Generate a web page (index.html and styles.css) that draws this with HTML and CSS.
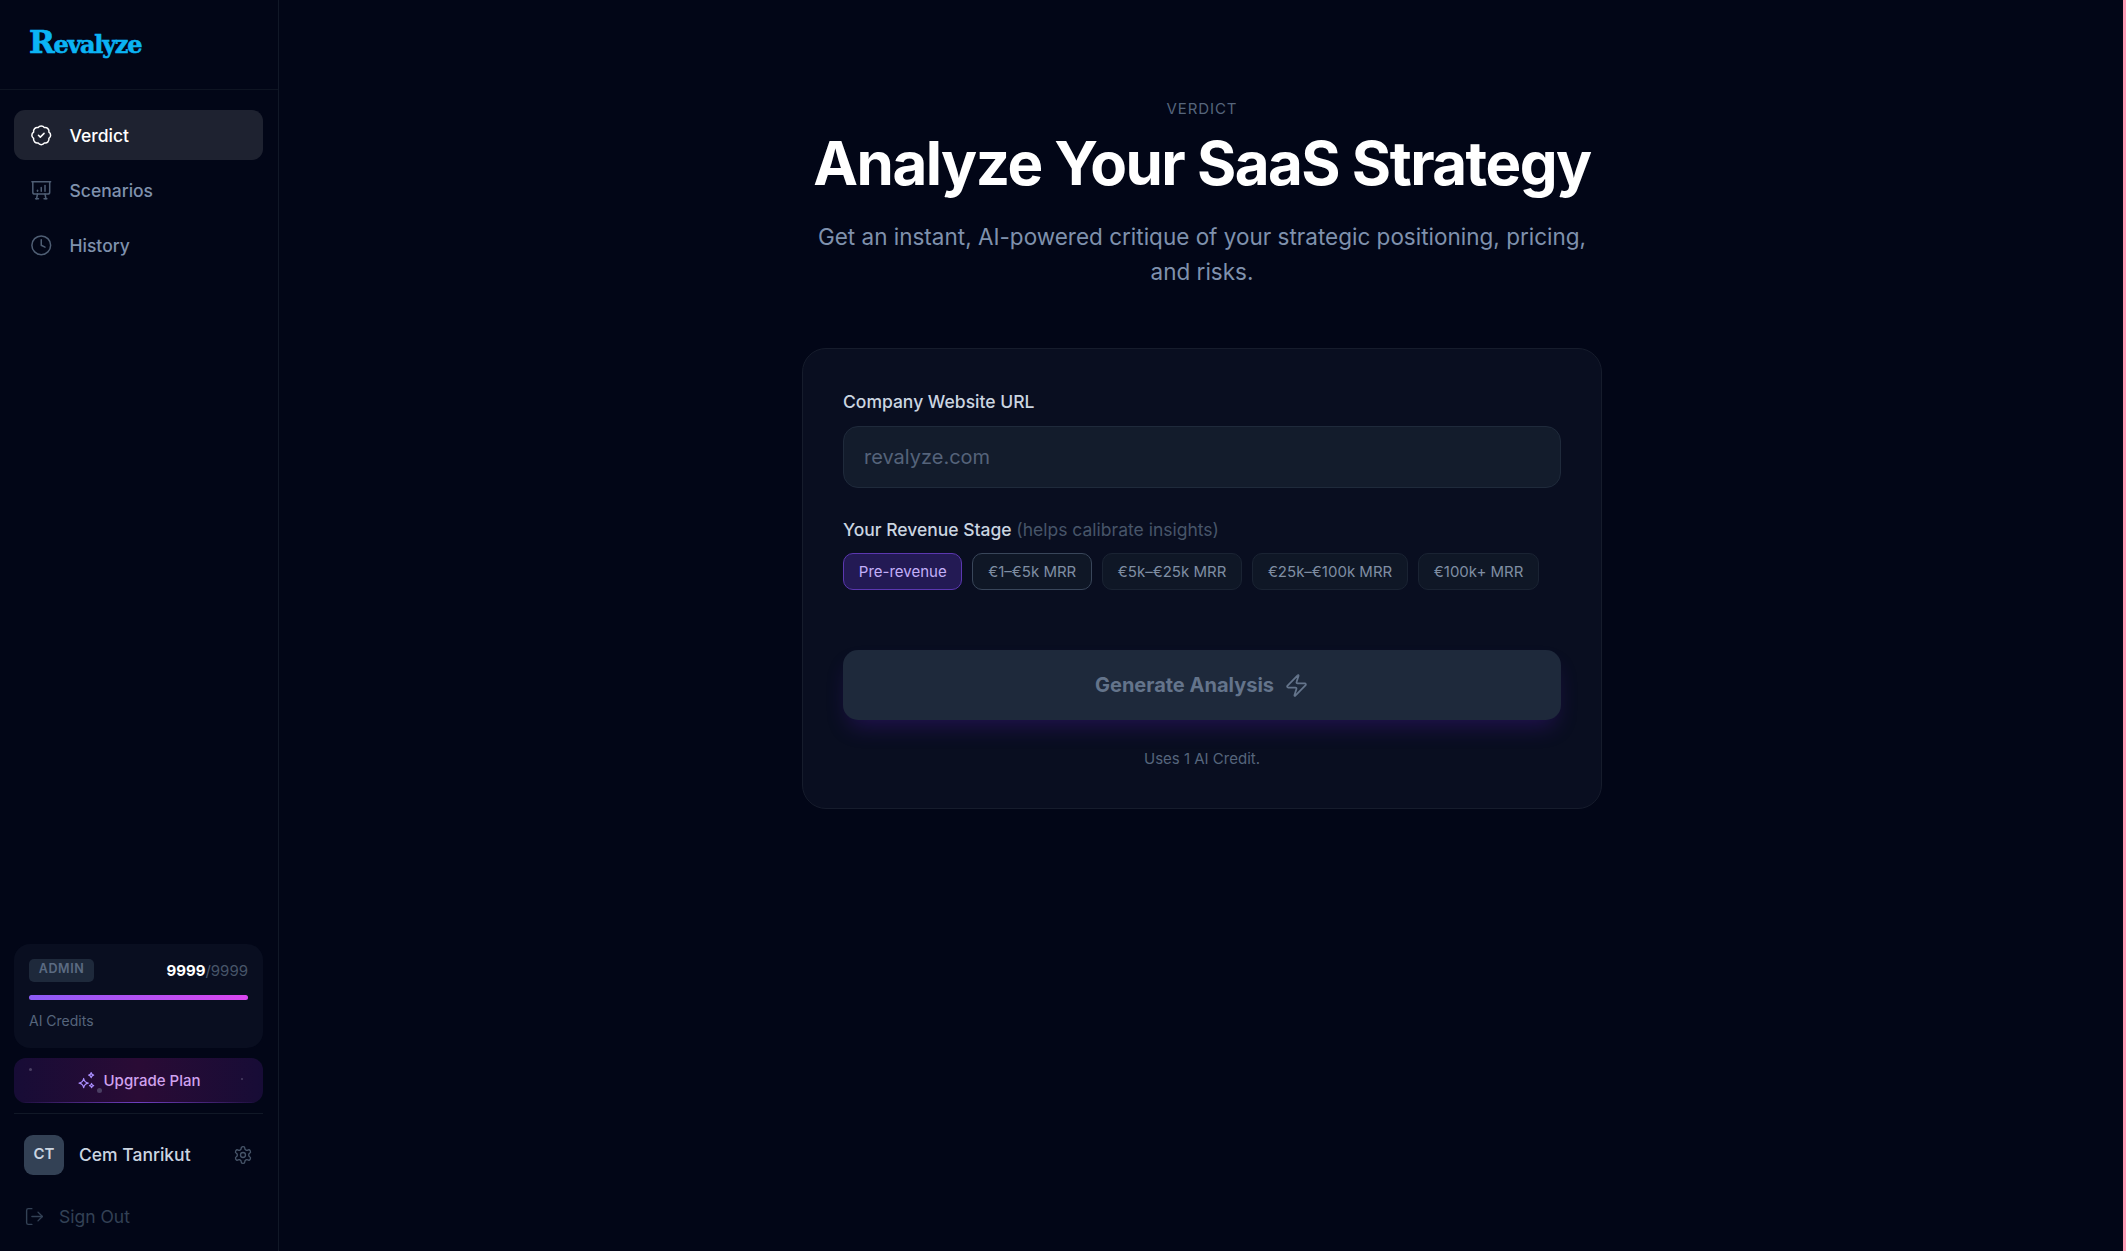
FILE: index.html
```html
<!DOCTYPE html>
<html lang="en">
<head>
    <meta charset="UTF-8">
    <title>Revalyze</title>
    <link rel="stylesheet" href="styles.css">
</head>
<body>
    <aside class="sidebar">
        <div class="logo-row"><span class="logo"><span class="logo-r">R</span>evalyze</span></div>
        <nav class="nav">
            <a class="nav-item active">
                <svg class="nav-icon" viewBox="0 0 24 24"><path d="M3.85 8.62a4 4 0 0 1 4.78-4.77 4 4 0 0 1 6.74 0 4 4 0 0 1 4.78 4.78 4 4 0 0 1 0 6.74 4 4 0 0 1-4.77 4.78 4 4 0 0 1-6.75 0 4 4 0 0 1-4.78-4.77 4 4 0 0 1 0-6.76Z"/><path d="m9 12 2 2 4-4"/></svg>
                Verdict
            </a>
            <a class="nav-item">
                <svg class="nav-icon" viewBox="0 0 24 24"><path d="M2 3h20"/><path d="M21 3v11a2 2 0 0 1-2 2H5a2 2 0 0 1-2-2V3"/><path d="m7 21 1-5"/><path d="m17 21-1-5"/><path d="M6 21h3"/><path d="M15 21h3"/><path d="M8 12v1"/><path d="M12 9v4"/><path d="M16 7v6"/></svg>
                Scenarios
            </a>
            <a class="nav-item">
                <svg class="nav-icon" viewBox="0 0 24 24"><circle cx="12" cy="12" r="10"/><path d="M12 6v6l4 2"/></svg>
                History
            </a>
        </nav>
        <div class="side-bottom">
            <div class="credits">
                <div class="credits-top">
                    <span class="badge">ADMIN</span>
                    <span class="count"><b>9999</b>/9999</span>
                </div>
                <div class="bar"><div class="bar-fill"></div></div>
                <div class="credits-label">AI Credits</div>
            </div>
            <a class="upgrade">
                <i class="dot dot-a"></i><i class="dot dot-b"></i><i class="dot dot-c"></i>
                <svg class="upgrade-icon" viewBox="0 0 24 24"><path d="M8 9c.6 3.400 2.100 4.900 5.500 5.500-3.400.6-4.900 2.100-5.500 5.500-.6-3.400-2.100-4.900-5.500-5.500C5.900 13.900 7.400 12.400 8 9Z"/><path d="M17 2c.3 1.900 1.100 2.700 3 3-1.900.3-2.700 1.100-3 3-.3-1.900-1.100-2.700-3-3 1.900-.3 2.700-1.100 3-3Z"/><path d="M17.500 15c.3 1.600.9 2.200 2.500 2.500-1.600.3-2.200.9-2.500 2.500-.3-1.600-.9-2.200-2.500-2.500 1.600-.3 2.200-.9 2.500-2.500Z"/></svg>
                Upgrade Plan
            </a>
            <div class="user-row">
                <div class="avatar">CT</div>
                <span class="user-name">Cem Tanrikut</span>
                <svg class="gear" viewBox="0 0 24 24"><path d="M12.220 2h-.44a2 2 0 0 0-2 2v.18a2 2 0 0 1-1 1.730l-.43.25a2 2 0 0 1-2 0l-.15-.08a2 2 0 0 0-2.730.73l-.22.380a2 2 0 0 0 .73 2.730l.15.1a2 2 0 0 1 1 1.720v.51a2 2 0 0 1-1 1.740l-.15.09a2 2 0 0 0-.73 2.730l.22.380a2 2 0 0 0 2.730.73l.15-.08a2 2 0 0 1 2 0l.43.25a2 2 0 0 1 1 1.730V20a2 2 0 0 0 2 2h.44a2 2 0 0 0 2-2v-.18a2 2 0 0 1 1-1.730l.43-.25a2 2 0 0 1 2 0l.15.08a2 2 0 0 0 2.730-.73l.22-.390a2 2 0 0 0-.73-2.730l-.15-.08a2 2 0 0 1-1-1.740v-.5a2 2 0 0 1 1-1.740l.15-.09a2 2 0 0 0 .73-2.730l-.22-.380a2 2 0 0 0-2.730-.73l-.15.08a2 2 0 0 1-2 0l-.43-.25a2 2 0 0 1-1-1.730V4a2 2 0 0 0-2-2Z"/><circle cx="12" cy="12" r="3"/></svg>
            </div>
            <a class="sign-out">
                <svg class="sign-icon" viewBox="0 0 24 24"><path d="M9 21H5a2 2 0 0 1-2-2V5a2 2 0 0 1 2-2h4"/><path d="m16 17 5-5-5-5"/><path d="M21 12H9"/></svg>
                Sign Out
            </a>
        </div>
    </aside>

    <main class="main">
        <div class="eyebrow">VERDICT</div>
        <h1 class="title">Analyze Your SaaS Strategy</h1>
        <p class="subtitle">Get an instant, AI-powered critique of your strategic positioning, pricing, and risks.</p>

        <section class="card">
            <label class="field-label">Company Website URL</label>
            <input class="url-input" type="text" placeholder="revalyze.com">

            <div class="field-label stage-label">Your Revenue Stage <span class="hint">(helps calibrate insights)</span></div>
            <div class="chips">
                <button class="chip selected">Pre-revenue</button>
                <button class="chip hovered">€1–€5k MRR</button>
                <button class="chip">€5k–€25k MRR</button>
                <button class="chip">€25k–€100k MRR</button>
                <button class="chip">€100k+ MRR</button>
            </div>

            <button class="generate">
                Generate Analysis
                <svg class="bolt" viewBox="0 0 24 24"><path d="M4 14a1 1 0 0 1-.78-1.630l9.900-10.200a.5.5 0 0 1 .86.46l-1.920 6.020A1 1 0 0 0 13 10h7a1 1 0 0 1 .78 1.630l-9.900 10.200a.5.5 0 0 1-.86-.46l1.920-6.020A1 1 0 0 0 11 14z"/></svg>
            </button>
            <div class="uses">Uses 1 AI Credit.</div>
        </section>
    </main>
    <div class="scroll-strip"></div>
</body>
</html>
```

FILE: styles.css
```css
* {
    box-sizing: border-box;
}

html, body {
    height: 100%;
}

body {
    margin: 0;
    display: flex;
    overflow: hidden;
    background: #020617;
    color: #fff;
    font-family: Inter, "Liberation Sans", sans-serif;
}

svg {
    fill: none;
    stroke: currentColor;
    stroke-width: 2;
    stroke-linecap: round;
    stroke-linejoin: round;
    flex-shrink: 0;
}

/* sidebar */
.sidebar {
    width: 279px;
    height: 1251px;
    flex-shrink: 0;
    display: flex;
    flex-direction: column;
    border-right: 1px solid #111827;
}

.logo-row {
    height: 90px;
    padding: 26px 0 0 29px;
    border-bottom: 1px solid #0e1422;
}

.logo {
    font-family: "DejaVu Serif", serif;
    font-weight: 700;
    font-size: 24px;
    letter-spacing: -1.300px;
    line-height: 32px;
    color: #0bb4f4;
    -webkit-text-stroke: 0.6px #0bb4f4;
}

.logo-r {
    font-size: 31px;
}

.nav {
    display: flex;
    flex-direction: column;
    gap: 5px;
    padding: 20px 15px 0 14px;
}

.nav-item {
    height: 50px;
    display: flex;
    align-items: center;
    gap: 17px;
    padding-left: 16px;
    border-radius: 11px;
    font-size: 17.500px;
    font-weight: 500;
    color: #7f91ad;
}

.nav-item.active {
    background: #1e2230;
    color: #fff;
}

.nav-icon {
    width: 22.500px;
    height: 22.500px;
    color: #4f5e74;
    stroke-width: 1.600;
}

.active .nav-icon {
    color: #fff;
}

.side-bottom {
    margin-top: auto;
    padding: 0 15px 14px 14px;
}

.credits {
    height: 104px;
    padding: 15px 15px 0;
    background: #090e20;
    border-radius: 16px;
}

.credits-top {
    display: flex;
    justify-content: space-between;
    align-items: center;
    height: 23px;
}

.badge {
    width: 65px;
    height: 23px;
    background: #1e293b;
    border-radius: 5px;
    color: #5b6b82;
    font-size: 12.500px;
    font-weight: 600;
    letter-spacing: 0.6px;
    text-align: center;
    line-height: 20px;
}

.count {
    font-size: 15px;
    color: #475569;
}

.count b {
    color: #fff;
    font-weight: 700;
}

.bar {
    height: 5px;
    margin-top: 13px;
    background: #1e293b;
    border-radius: 3px;
}

.bar-fill {
    height: 100%;
    border-radius: 3px;
    background: linear-gradient(90deg, #8b5cf6, #d946ef);
}

.credits-label {
    margin-top: 12px;
    font-size: 14px;
    color: #56657c;
}

.upgrade {
    position: relative;
    height: 45px;
    margin-top: 10px;
    display: flex;
    align-items: center;
    justify-content: center;
    gap: 7px;
    border-radius: 12px;
    background: linear-gradient(90deg, #170c36, #2a0b35 50%, #170c36);
    color: #d0a2ee;
    font-size: 15px;
    font-weight: 500;
    overflow: hidden;
}

.upgrade::after {
    content: "";
    position: absolute;
    left: 0;
    right: 0;
    bottom: 0;
    height: 1px;
    background: linear-gradient(90deg, transparent, #6d3fc0 50%, transparent);
}

.upgrade-icon {
    width: 20px;
    height: 20px;
    color: #a78bfa;
    stroke-width: 1.500;
}

.dot {
    position: absolute;
    border-radius: 50%;
    background: #4a3f63;
}

.dot-a {
    left: 15px;
    top: 10px;
    width: 3px;
    height: 3px;
}

.dot-b {
    left: 83px;
    top: 30px;
    width: 5px;
    height: 5px;
}

.dot-c {
    left: 227px;
    top: 20px;
    width: 2px;
    height: 2px;
}

.user-row {
    height: 82px;
    margin-top: 10px;
    padding: 0 10px;
    display: flex;
    align-items: center;
    gap: 15px;
    border-top: 1px solid #111827;
}

.avatar {
    width: 40px;
    height: 40px;
    border-radius: 9px;
    background: #334155;
    color: #cbd5e1;
    font-size: 15px;
    font-weight: 600;
    text-align: center;
    line-height: 38px;
}

.user-name {
    flex: 1;
    font-size: 17.500px;
    font-weight: 500;
    color: #cbd5e1;
}

.gear {
    width: 20px;
    height: 20px;
    color: #475569;
    stroke-width: 1.600;
}

.sign-out {
    height: 42px;
    padding-left: 10px;
    display: flex;
    align-items: center;
    gap: 14px;
    font-size: 17.500px;
    color: #334155;
}

.sign-icon {
    width: 21px;
    height: 21px;
    stroke-width: 1.600;
}

/* main column */
.main {
    flex: 1;
    display: flex;
    flex-direction: column;
    align-items: center;
    padding: 99px 1px 0 0;
}

.eyebrow {
    font-size: 15px;
    line-height: 20px;
    letter-spacing: 0.900px;
    color: #56657c;
}

.title {
    margin: 11px 0 0;
    font-size: 60px;
    line-height: 66px;
    font-weight: 700;
    letter-spacing: -1.500px;
    color: #fff;
}

.subtitle {
    width: 800px;
    margin: 23px 0 0;
    font-size: 22.500px;
    line-height: 35px;
    color: #7f91ad;
    text-align: center;
}

.card {
    width: 800px;
    height: 461px;
    margin-top: 59px;
    padding: 39px 40px;
    background: #090e20;
    border: 1px solid #161c2c;
    border-radius: 24px;
}

.field-label {
    display: block;
    font-size: 17.500px;
    line-height: 28px;
    font-weight: 500;
    color: #cbd5e1;
}

.url-input {
    display: block;
    width: 100%;
    height: 62px;
    margin-top: 10px;
    padding: 0 20px;
    background: #131c2c;
    border: 1px solid #1f2a3b;
    border-radius: 15px;
    font: 20px Inter, sans-serif;
    color: #fff;
    outline: none;
}

.url-input::placeholder {
    color: #55637a;
}

.stage-label {
    margin-top: 28px;
}

.hint {
    font-weight: 400;
    color: #475569;
}

.chips {
    display: flex;
    gap: 10px;
    margin-top: 9px;
}

.chip {
    height: 37px;
    padding: 0 14.800px;
    background: #0f1726;
    border: 1px solid #1a2333;
    border-radius: 10px;
    font: 15px Inter, sans-serif;
    color: #7f8ea3;
}

.chip.selected {
    background: #231a54;
    border-color: #5b37b0;
    color: #c4b0fa;
}

.chip.hovered {
    border-color: #39465a;
}

.generate {
    width: 100%;
    height: 70px;
    margin-top: 60px;
    display: flex;
    align-items: center;
    justify-content: center;
    gap: 10px;
    background: #1e293b;
    border: none;
    border-radius: 15px;
    box-shadow: 0 12px 22px -6px rgba(88, 28, 190, 0.3);
    font: 700 20px Inter, sans-serif;
    color: #64748b;
}

.bolt {
    width: 25px;
    height: 25px;
    stroke-width: 1.700;
}

.uses {
    margin-top: 29px;
    font-size: 15px;
    line-height: 20px;
    color: #56657c;
    text-align: center;
}

.scroll-strip {
    position: fixed;
    top: 0;
    right: 0;
    bottom: 0;
    width: 3px;
    background: #ff9fb8;
}
```
